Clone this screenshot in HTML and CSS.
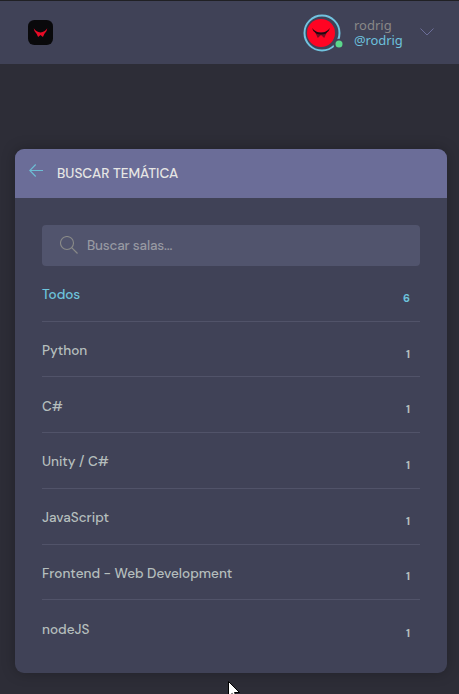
FILE: index.html
```
<!DOCTYPE html>
<html lang="es">
<head>
<meta charset="utf-8">
<title>Buscar temática</title>
<link rel="stylesheet" href="styles.css">
</head>
<body>
<header class="topbar">
  <svg class="logo" viewBox="0 0 24 24"><rect width="24" height="24" rx="6" fill="#09090b"/><path d="M5.500 8 Q8 11.900 12 12 Q16 11.900 18.500 8 Q18.300 11.300 15.800 13.300 L14.300 16.300 L12 14.500 L9.700 16.300 L8.200 13.300 Q5.700 11.300 5.500 8Z" fill="#e80b26"/></svg>
  <div class="user">
    <svg class="avatar" viewBox="0 0 42 40"><circle cx="19" cy="19" r="17.500" fill="none" stroke="#71c3df" stroke-width="2"/><circle cx="18" cy="19" r="14" fill="#ff0423"/><path d="M12 18 H24 L21.200 24 L18 21 L14.800 24Z" fill="#780d20"/><path d="M9 14 Q13 18.700 18 18.900 Q23 18.700 27 14 Q26 18 22.500 19.800 Q18 21.200 13.500 19.800 Q10 18 9 14Z" fill="#1c0a12"/><circle cx="35.500" cy="30" r="5.200" fill="#404257"/><circle cx="36" cy="30" r="3.500" fill="#5bd78b"/></svg>
    <div class="names"><span class="name">rodrig</span><span class="handle">@rodrig</span></div>
    <svg class="chevron" viewBox="0 0 14 8"><path d="M.5 .5 L7 7 L13.500 .5" fill="none" stroke="#6b6d98"/></svg>
  </div>
</header>
<main class="card">
  <div class="card-head">
    <svg class="back" viewBox="0 0 14 13"><path d="M14 6.500H1M6.700 .5L.8 6.500L6.700 12.500" fill="none" stroke="#6dbed5" stroke-width="1.100"/></svg>
    <h1>BUSCAR TEMÁTICA</h1>
  </div>
  <div class="card-body">
    <div class="search">
      <svg viewBox="0 0 18 18"><circle cx="7" cy="7" r="6.500" fill="none" stroke="#898a88" stroke-width="1.100"/><path d="M11.700 11.700L17.500 17.500" stroke="#898a88" stroke-width="1.200"/></svg>
      <span>Buscar salas...</span>
    </div>
    <ul>
      <li class="active"><span class="topic">Todos</span><span class="count">6</span></li>
      <li><span class="topic">Python</span><span class="count">1</span></li>
      <li><span class="topic">C#</span><span class="count">1</span></li>
      <li><span class="topic">Unity / C#</span><span class="count">1</span></li>
      <li><span class="topic">JavaScript</span><span class="count">1</span></li>
      <li><span class="topic">Frontend - Web Development</span><span class="count">1</span></li>
      <li><span class="topic">nodeJS</span><span class="count">1</span></li>
    </ul>
  </div>
</main>
<svg class="cursor" viewBox="0 0 12 19"><path d="M.5 .5V16L4.200 12.500L7 18L9.200 17L6.500 11.500H11.500Z" fill="#fff" stroke="#000"/></svg>
</body>
</html>
```
FILE: styles.css
```
* { box-sizing: border-box; }
body { margin: 0; height: 694px; overflow: hidden; background: #2d2d37; font-family: "DM Sans", Inter, sans-serif; color: #b5bebd; }
svg { display: block; flex: none; }
.topbar { height: 64px; padding: 0 25px 0 28px; border-top: 1px solid #202024; background: #404257; display: flex; align-items: center; justify-content: space-between; }
.logo { width: 25px; height: 25px; }
.user { display: flex; align-items: center; }
.avatar { width: 42px; height: 40px; margin-top: 2px; }
.names { display: flex; flex-direction: column; margin-left: 9px; width: 66px; font: 13px/15px "Noto Sans", sans-serif; }
.name { color: #898888; }
.handle { color: #6dc0dc; letter-spacing: -0.1px; }
.chevron { width: 14px; height: 8px; margin-top: -2px; }
.card { width: 432px; height: 524px; margin: 85px 0 0 15px; border-radius: 9px; overflow: hidden; background: #404257; box-shadow: 0 0 14px rgba(0, 0, 0, .25); }
.card-head { height: 49px; background: #6b6d98; display: flex; align-items: center; padding-left: 14px; gap: 14px; }
.back { width: 14px; height: 13px; margin-top: -6px; }
h1 { margin: 0; font-size: 13.6px; font-weight: 500; color: #e6e6e4; }
.card-body { padding: 27px 27px 0; }
.search { height: 41px; border-radius: 4px; background: #51546d; display: flex; align-items: center; gap: 9px; padding-left: 18px; font-size: 13.5px; font-weight: 500; letter-spacing: -0.18px; color: #9799a2; }
.search svg { width: 18px; height: 18px; margin-top: -1px; }
ul { list-style: none; margin: 0; padding: 0; }
li { height: 55.72px; display: flex; justify-content: space-between; align-items: center; border-bottom: 1px solid #515369; padding-right: 10px; font-size: 13.55px; font-weight: 500; }
li:last-child { border-bottom: 0; }
.topic { margin-top: 2.6px; }
.active { color: #6dc4dc; }
.count { margin-top: 9px; font-size: 11px; font-weight: 700; }
.cursor { position: absolute; left: 228px; top: 681px; width: 12px; height: 19px; }
```
